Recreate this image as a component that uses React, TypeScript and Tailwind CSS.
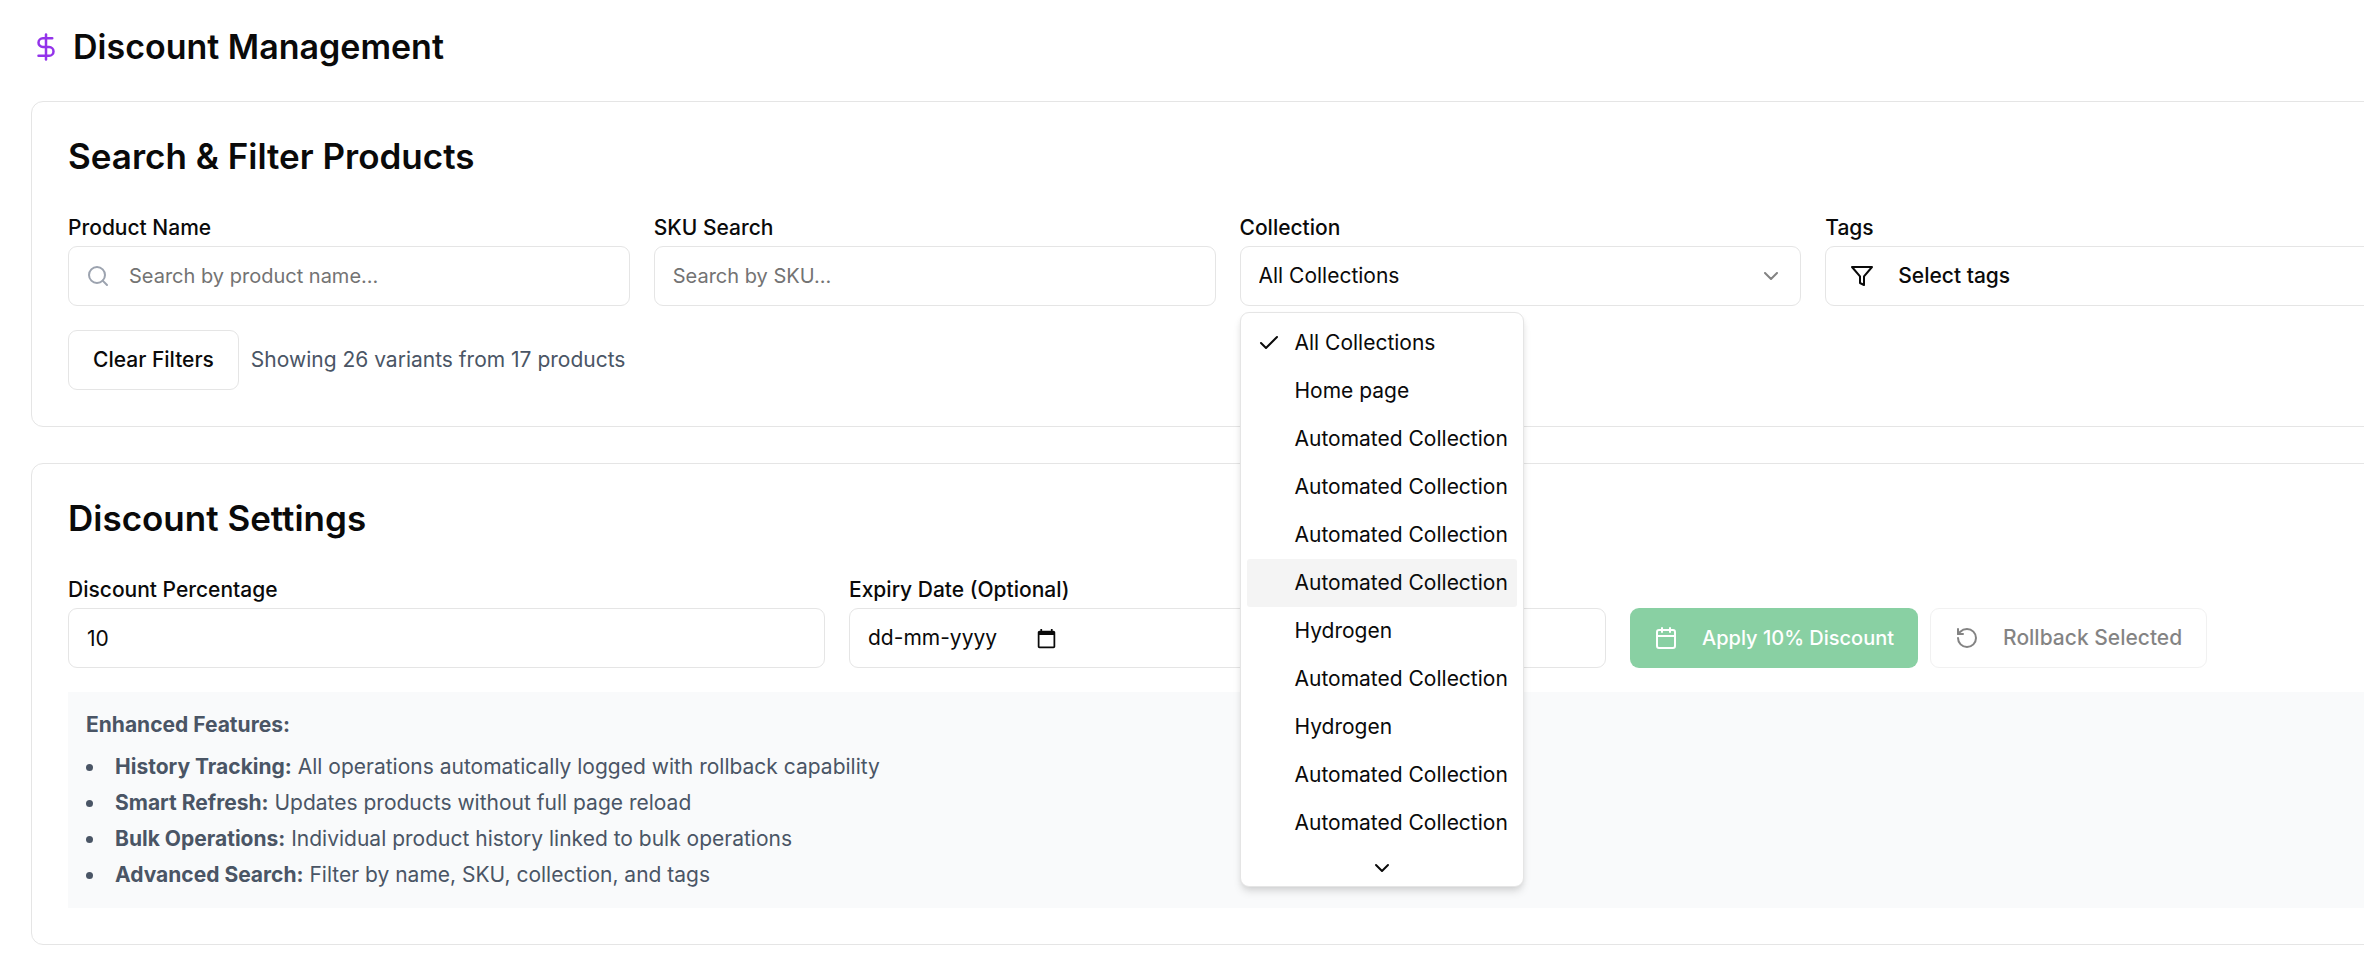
import { useState } from "react";
import type { ReactNode } from "react";
import { Calendar, Check, ChevronDown, DollarSign, RotateCcw, Search } from "lucide-react";

const collections = [
  "All Collections",
  "Home page",
  "Automated Collection",
  "Automated Collection",
  "Automated Collection",
  "Automated Collection",
  "Hydrogen",
  "Automated Collection",
  "Hydrogen",
  "Automated Collection",
  "Automated Collection",
];

const features = [
  ["History Tracking:", "All operations automatically logged with rollback capability"],
  ["Smart Refresh:", "Updates products without full page reload"],
  ["Bulk Operations:", "Individual product history linked to bulk operations"],
  ["Advanced Search:", "Filter by name, SKU, collection, and tags"],
];

const control =
  "block h-[60px] w-full rounded-[9px] border border-[#e5e5e5] bg-white px-[18px] text-[#0a0a0a] outline-none placeholder:text-[#737373]";
const label = "block text-[21px] leading-9 font-medium text-[#0a0a0a]";
const outlineButton =
  "flex h-[60px] items-center rounded-[9px] border border-[#e5e5e5] bg-white px-6 text-[21px] font-medium whitespace-nowrap text-[#0a0a0a]";

function Card({ title, children }: { title: string; children: ReactNode }) {
  return (
    <section className="rounded-xl border border-[#e5e5e5] bg-white p-9">
      <h2 className="mb-9 text-[35px] leading-9 font-semibold">{title}</h2>
      {children}
    </section>
  );
}

function FilterIcon() {
  return (
    <svg
      className="size-6"
      viewBox="0 0 24 24"
      fill="none"
      stroke="currentColor"
      strokeWidth="2"
      strokeLinecap="round"
      strokeLinejoin="round"
      aria-hidden="true"
    >
      <polygon points="22 3 2 3 10 12.46 10 19 14 21 14 12.46 22 3" />
    </svg>
  );
}

function DateIcon() {
  return (
    <svg className="size-[21px]" viewBox="0 0 24 24" fill="currentColor" aria-hidden="true">
      <path d="M20 3h-1V1h-2v2H7V1H5v2H4c-1.1 0-2 .9-2 2v16c0 1.1.9 2 2 2h16c1.1 0 2-.9 2-2V5c0-1.1-.9-2-2-2zm0 18H4V8h16v13z" />
    </svg>
  );
}

function CollectionMenu({ highlighted }: { highlighted: number }) {
  return (
    <div className="absolute top-full left-0 z-10 mt-[6px] w-[284px] rounded-[9px] border border-[#e5e5e5] bg-white shadow-[0_6px_9px_-1px_rgba(0,0,0,0.1),0_3px_6px_-2px_rgba(0,0,0,0.1)]">
      <ul role="listbox" aria-label="Collections" className="px-[6px] pt-[6px] pb-[3px]">
        {collections.map((name, index) => (
          <li
            key={index}
            role="option"
            aria-selected={index === 0}
            className={
              index === highlighted
                ? "flex h-12 items-center gap-[14px] rounded-[3px] bg-[#f4f4f4] pl-[10px] text-[21px] whitespace-nowrap"
                : "flex h-12 items-center gap-[14px] rounded-[3px] pl-[10px] text-[21px] whitespace-nowrap"
            }
          >
            <span className="size-6 shrink-0">{index === 0 && <Check className="size-6" />}</span>
            {name}
          </li>
        ))}
      </ul>
      <div className="flex h-9 items-center justify-center">
        <ChevronDown className="size-6" />
      </div>
    </div>
  );
}

export default function App() {
  const [percentage, setPercentage] = useState("10");

  return (
    <div className="min-h-screen overflow-hidden bg-white font-['Inter','Liberation_Sans',sans-serif] text-[#0a0a0a]">
      <main className="-mr-[60px] pt-6 pl-[31px]">
        <header className="mb-8 flex items-center gap-3">
          <DollarSign className="size-[30px] text-[#9333ea]" />
          <h1 className="text-[34px] leading-[45px] font-semibold">Discount Management</h1>
        </header>

        <div className="flex flex-col gap-9">
          <Card title="Search & Filter Products">
            <div className="grid grid-cols-4 gap-6">
              <div>
                <label htmlFor="product-name" className={label}>
                  Product Name
                </label>
                <div className="relative">
                  <Search className="absolute top-[18px] left-[18px] size-6 text-[#9ca3af]" />
                  <input
                    id="product-name"
                    type="text"
                    placeholder="Search by product name..."
                    className="block h-[60px] w-full rounded-[9px] border border-[#e5e5e5] bg-transparent pr-[18px] pl-[60px] text-[20px] outline-none placeholder:text-[#737373]"
                  />
                </div>
              </div>
              <div>
                <label htmlFor="sku" className={label}>
                  SKU Search
                </label>
                <input id="sku" type="text" placeholder="Search by SKU..." className={`${control} text-[20px]`} />
              </div>
              <div>
                <label htmlFor="collection" className={label}>
                  Collection
                </label>
                <div className="relative">
                  <select id="collection" className={`${control} appearance-none text-[21px]`}>
                    <option>All Collections</option>
                    <option>Home page</option>
                    <option>Automated Collection</option>
                    <option>Hydrogen</option>
                  </select>
                  <ChevronDown className="pointer-events-none absolute top-[18px] right-[18px] size-6 opacity-50" />
                  <CollectionMenu highlighted={5} />
                </div>
              </div>
              <div>
                <label htmlFor="tags" className={label}>
                  Tags
                </label>
                <button id="tags" type="button" className={`${outlineButton} w-full gap-6`}>
                  <FilterIcon />
                  Select tags
                </button>
              </div>
            </div>
            <div className="mt-6 flex items-center gap-3">
              <button type="button" className={outlineButton}>
                Clear Filters
              </button>
              <span className="text-[21px] text-[#4a5565]">Showing 26 variants from 17 products</span>
            </div>
          </Card>

          <Card title="Discount Settings">
            <div className="grid grid-cols-3 items-end gap-6">
              <div>
                <label htmlFor="percentage" className={label}>
                  Discount Percentage
                </label>
                <input
                  id="percentage"
                  type="number"
                  value={percentage}
                  onChange={(event) => setPercentage(event.target.value)}
                  className={`${control} text-[21px]`}
                />
              </div>
              <div>
                <label htmlFor="expiry" className={label}>
                  Expiry Date (Optional)
                </label>
                <div className="flex h-[60px] items-center rounded-[9px] border border-[#e5e5e5] pl-[18px]">
                  <input
                    id="expiry"
                    type="text"
                    placeholder="dd-mm-yyyy"
                    className="w-[168px] bg-transparent text-[21px] outline-none placeholder:text-[#0a0a0a]"
                  />
                  <button type="button" aria-label="Open calendar">
                    <DateIcon />
                  </button>
                </div>
              </div>
              <div className="flex gap-3">
                <button
                  type="button"
                  disabled
                  className="flex h-[60px] items-center gap-6 rounded-[9px] bg-[#16a34a] px-6 text-[20px] font-medium whitespace-nowrap text-white opacity-50"
                >
                  <Calendar className="size-6" />
                  Apply {percentage}% Discount
                </button>
                <button type="button" disabled className={`${outlineButton} gap-6 opacity-50`}>
                  <RotateCcw className="size-6" />
                  Rollback Selected
                </button>
              </div>
            </div>

            <div className="mt-6 bg-[#f9fafb] p-[18px] text-[21px] leading-[30px] text-[#4a5565]">
              <p className="mb-3 font-bold">Enhanced Features:</p>
              <ul className="flex list-inside list-disc flex-col gap-[6px]">
                {features.map(([name, description]) => (
                  <li key={name}>
                    <strong className="font-bold">{name}</strong> {description}
                  </li>
                ))}
              </ul>
            </div>
          </Card>
        </div>
      </main>
    </div>
  );
}
